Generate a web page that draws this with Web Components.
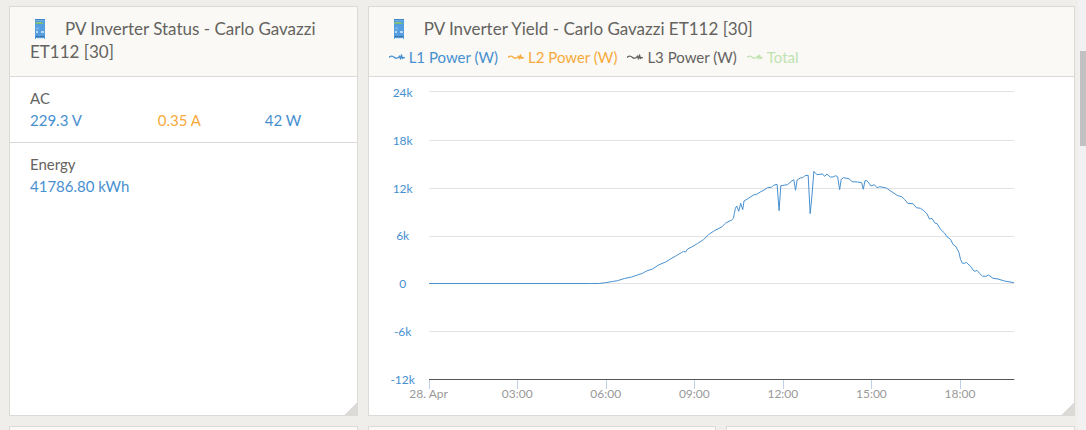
<!DOCTYPE html>
<html lang="en">
<head>
<meta charset="utf-8">
<meta name="viewport" content="width=device-width, initial-scale=1">
<title>PV Inverter dashboard</title>
<style>
  html, body { margin: 0; height: 100%; }
  body {
    --blue: #4790d0; --orange: #f7a93b; --grey: #64635f; --green: #c0e2b0;
    --line: #dbdad6; --page: #efeeea; --head: #faf9f5;
    background: var(--page); color: var(--grey);
    font: 15px/22px Lato, "Open Sans", sans-serif;
    overflow: hidden;
  }
</style>
</head>
<body>
<pv-dashboard></pv-dashboard>
<script>
const define = (name, html) => {
  const template = document.createElement('template');
  template.innerHTML = html;
  customElements.define(name, class extends HTMLElement {
    constructor() {
      super();
      this.attachShadow({ mode: 'open' }).append(template.content.cloneNode(true));
    }
  });
};

define('inverter-icon', `
  <style>
    :host { display: inline-block; width: 10px; height: 20px; }
    svg { display: block; }
  </style>
  <svg width="10" height="20" shape-rendering="crispEdges" aria-hidden="true">
    <path fill="#559fe0" d="M0 0h10v20H9v-1H1v1H0z"/>
    <path fill="#3f86c4" d="M0 0h10v1H0zM0 17h10v1H0z"/>
    <path fill="#8cbfea" d="M1 1h8v1H1zM1 8h3v3H1z" opacity=".5"/>
    <path fill="#78b97f" d="M0 4h9v1H0z"/>
    <path fill="#8cc47c" d="M1 3h6v1H1z"/>
    <path fill="#b9d9f3" d="M1 12h2v2H1zM6 12h3v2H6z"/>
    <path fill="#3a6f9f" d="M1 17h3v1H1zM5 17h4v1H5z"/>
    <path fill="#d9e8f2" d="M2 19h6v1H2z"/>
  </svg>`);

define('pv-card', `
  <style>
    :host {
      display: flex; flex-direction: column; position: relative;
      box-sizing: border-box; min-width: 0;
      background: #fff; border: 1px solid var(--line);
    }
    header {
      box-sizing: border-box; min-height: 70px; padding: 10px 20px 6px;
      background: var(--head); border-bottom: 1px solid var(--line);
    }
    h2 { margin: 0; font-size: 17px; line-height: 23px; font-weight: inherit; }
    inverter-icon { margin: 0 20px 0 5px; vertical-align: -4px; }
    .corner {
      position: absolute; right: 0; bottom: 0; width: 12px; height: 12px;
      background: linear-gradient(135deg, transparent 50%, var(--line) 50%);
    }
  </style>
  <header>
    <h2><inverter-icon></inverter-icon><slot name="title"></slot></h2>
    <slot name="legend"></slot>
  </header>
  <slot></slot>
  <span class="corner"></span>`);

define('pv-reading', `
  <style>
    :host { display: block; padding: 10px 20px 11px; }
    :host([divided]) { border-bottom: 1px solid var(--line); }
    div { display: grid; grid-template-columns: 128fr 107fr 72fr; white-space: nowrap; color: var(--blue); }
  </style>
  <slot name="label"></slot>
  <div><slot></slot></div>`);

define('legend-item', `
  <style>
    :host { display: block; }
    button {
      display: flex; align-items: center; gap: 4px; padding: 0; border: 0;
      background: none; color: inherit; font: inherit; white-space: nowrap; cursor: pointer;
    }
  </style>
  <button type="button">
    <svg width="16" height="8" fill="none" stroke="currentColor" stroke-linejoin="round" aria-hidden="true">
      <path stroke-width="1.3" d="M0 4.500C2 2.500 4 3 5.500 4.500S8 5 9.500 4.500l1-1.500 1 3 1-4 1 3.500 1-1 1.500.5"/>
    </svg>
    <slot></slot>
  </button>`);

define('chart-legend', `
  <style>:host { display: flex; flex-wrap: wrap; gap: 0 10px; margin-top: 6px; }</style>
  <slot></slot>`);

const yieldLine = `0,192.5 161,192.500 170,192.500 176,191.700 183,190.500 188,189.700 195,187.500 202,186 208,184
  213,182.300 217,180 223,178 229,174 236,171 241,168 247,164.500 252,161.500 254,160.300 256,161 258,158 262,156
  268,152.500 274,148.500 279,143.500 285,139.500 292,136 296,132 302,129 303.700,127.300 304.700,122.300
  305.700,117.300 307,115 309,120.300 311,112.300 313,118.700 314.300,110 317.700,108 323.700,104 327,103.300
  331,100.700 334.300,99 337.700,96.700 341.700,96.300 343.700,94.300 347.300,93.300 349.300,119.700 351,94.700
  357.700,93.700 361,90.700 364,88.700 365.700,99.300 367.300,89 371,86.700 373,86.700 375,84.700 378.300,84.300
  380.300,122.700 382,105.700 384,80.300 387,83.700 392.300,83 395,85.300 397,83 400.300,86 403,86 405.700,84.700
  407.700,85.700 409.700,98.700 411.300,88.300 413.700,86.700 419,87.700 422.300,90.700 427.700,91 431.700,91.700
  433.300,98.300 435,89.700 437,89.700 441,95 444.300,93.700 447,96.700 449.700,95.700 456.300,97 461,100.300
  467.700,104.700 471.700,105.700 474.300,108.300 477.700,112.300 483,112.700 486.300,116.700 490.300,117.300
  493.700,119.700 497,123 499.300,128 501.700,127.300 505,132.300 507,132.700 510.300,138.300 514.300,142 517,146
  520.300,148.300 523,153.700 525.300,155 528.700,161.300 530.300,168.300 532.300,172.300 534.300,172.300
  536,171.300 540.300,175.300 543,179.300 544.700,180.300 546.700,179.300 549.300,182.300 552.300,185.300
  555.700,185.300 558.300,184 562.700,187.300 567.700,188 574.300,190 583.700,191.700`;

define('yield-chart', `
  <style>
    :host {
      display: grid; grid-template-columns: 28px minmax(0, 1fr); column-gap: 12px;
      padding: 8px 60px 13px 20px; font-size: 12px; line-height: 16px;
    }
    ol { list-style: none; margin: 0; padding: 0; }
    .y {
      display: flex; flex-direction: column; justify-content: space-between;
      margin-bottom: -8px; text-align: center; color: var(--blue);
    }
    svg { display: block; width: 100%; height: 289px; margin-top: 6px; overflow: visible; }
    .x {
      grid-column: 2; display: grid; color: #999;
      grid-template-columns: repeat(6, 177fr) 108fr;
    }
    .x li { padding-top: 6px; }
    .x span { display: flex; justify-content: center; width: 0; white-space: nowrap; }
    .x li { background: linear-gradient(#c0d0e8, #c0d0e8) 0 0 / 1px 9px no-repeat; }
  </style>
  <ol class="y"><li>24k</li><li>18k</li><li>12k</li><li>6k</li><li>0</li><li>-6k</li><li>-12k</li></ol>
  <svg viewBox="0 0 584 289" preserveAspectRatio="none" role="img" aria-label="L1 power over the day">
    <path stroke="#e3e3e3" vector-effect="non-scaling-stroke"
      d="M0 .5h584M0 49.500h584M0 97.500h584M0 145.500h584M0 192.500h584M0 240.500h584"/>
    <path stroke="#555" vector-effect="non-scaling-stroke" d="M0 288.500h584"/>
    <polyline fill="none" stroke="#4790d0" stroke-linejoin="round" vector-effect="non-scaling-stroke" points="${yieldLine}"/>
  </svg>
  <ol class="x"><li><span>28. Apr</span></li><li><span>03:00</span></li><li><span>06:00</span></li><li><span>09:00</span></li><li><span>12:00</span></li><li><span>15:00</span></li><li><span>18:00</span></li></ol>`);

define('page-scrollbar', `
  <style>
    :host { display: block; background: #f1f1f1; padding: 51px 0 0 2px; }
    div { height: 95px; background: #c1c1c1; }
  </style>
  <div></div>`);

define('pv-dashboard', `
  <style>
    :host { display: grid; grid-template-columns: minmax(0, 1fr) 8px; height: 100vh; overflow: hidden; }
    main {
      display: grid; grid-template-columns: repeat(3, minmax(0, 1fr));
      grid-auto-rows: max-content; gap: 10px; padding: 6px 3px 0 9px;
    }
    .wide { grid-column: span 2; }
    .blue { color: var(--blue); } .orange { color: var(--orange); } .green { color: var(--green); }
  </style>
  <main>
    <pv-card>
      <span slot="title">PV Inverter Status - Carlo Gavazzi ET112 [30]</span>
      <pv-reading divided>
        <span slot="label">AC</span>
        <span>229.3 V</span><span class="orange">0.35 A</span><span>42 W</span>
      </pv-reading>
      <pv-reading><span slot="label">Energy</span><span>41786.80 kWh</span></pv-reading>
    </pv-card>
    <pv-card class="wide">
      <span slot="title">PV Inverter Yield - Carlo Gavazzi ET112 [30]</span>
      <chart-legend slot="legend">
        <legend-item class="blue">L1 Power (W)</legend-item>
        <legend-item class="orange">L2 Power (W)</legend-item>
        <legend-item>L3 Power (W)</legend-item>
        <legend-item class="green">Total</legend-item>
      </chart-legend>
      <yield-chart></yield-chart>
    </pv-card>
    <pv-card></pv-card>
    <pv-card></pv-card>
    <pv-card></pv-card>
  </main>
  <page-scrollbar></page-scrollbar>`);
</script>
</body>
</html>
